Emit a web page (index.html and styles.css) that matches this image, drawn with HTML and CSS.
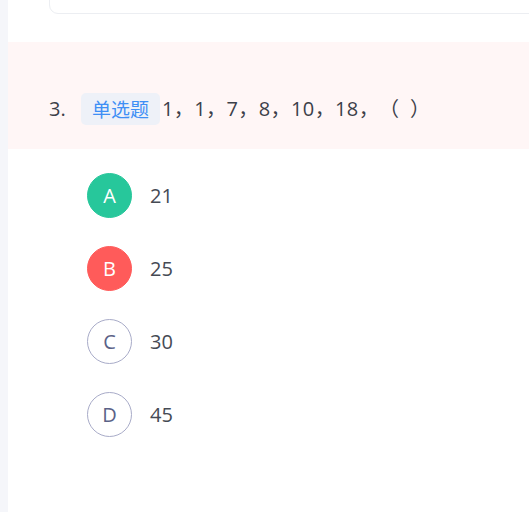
FILE: index.html
```html
<!DOCTYPE html>
<html lang="zh">
<head>
<meta charset="utf-8">
<link rel="stylesheet" href="styles.css">
</head>
<body>
<div class="page">
  <div class="side"></div>
  <div class="main">
    <div class="card"></div>
    <div class="question">
      <span class="num">3.</span>
      <span class="tag">单选题</span>
      <span class="stem">1，1，7，8，10，18，（ ）</span>
    </div>
    <ul class="options">
      <li class="opt"><span class="circle correct">A</span><span class="val">21</span></li>
      <li class="opt"><span class="circle wrong">B</span><span class="val">25</span></li>
      <li class="opt"><span class="circle">C</span><span class="val">30</span></li>
      <li class="opt"><span class="circle">D</span><span class="val">45</span></li>
    </ul>
  </div>
</div>
</body>
</html>
```
FILE: styles.css
```css
* { box-sizing: border-box; }
html, body { margin: 0; padding: 0; background: #fff; }
body {
  font-family: "Open Sans", "Noto Sans CJK SC", sans-serif;
  color: #3c4049;
  overflow: hidden;
}
.page {
  display: flex;
  height: 512px;
}
.side {
  width: 8px;
  flex: none;
  background: #f5f6fa;
}
.main {
  flex: 1;
  display: flex;
  flex-direction: column;
}
.card {
  margin: -40px -20px 0 41px;
  height: 54px;
  border: 1px solid #eceef2;
  border-radius: 9px;
}
.question {
  margin-top: 28px;
  height: 107px;
  background: #fff6f6;
  display: flex;
  align-items: center;
  padding: 26px 0 0 41px;
  font-size: 20px;
  line-height: 32px;
}
.num {
  width: 32px;
  color: #3c4049;
}
.tag {
  font-family: "Noto Sans CJK SC", sans-serif;
  font-size: 19px;
  line-height: 32px;
  height: 32px;
  padding: 0 11px;
  background: #eef1f8;
  color: #3e8ff5;
  border-radius: 5px;
  margin-right: 2px;
}
.stem {
  font-family: "Open Sans", "Noto Sans CJK SC", sans-serif;
  color: #3c4049;
  text-spacing-trim: space-all;
  font-feature-settings: "halt" 0;
  letter-spacing: 0.4px;
  word-spacing: 5px;
}
.options {
  list-style: none;
  margin: 24px 0 0 0;
  padding: 0 0 0 79px;
  display: flex;
  flex-direction: column;
  gap: 28px;
}
.opt {
  display: flex;
  align-items: center;
  height: 45px;
}
.circle {
  width: 45px;
  height: 45px;
  border-radius: 50%;
  border: 1px solid #a8abc8;
  color: #5b6287;
  display: flex;
  align-items: center;
  justify-content: center;
  font-size: 20px;
  margin-right: 18px;
}
.circle.correct {
  background: #27c79b;
  border-color: #27c79b;
  color: #fff;
}
.circle.wrong {
  background: #ff5b5a;
  border-color: #ff5b5a;
  color: #fff;
}
.val {
  font-size: 20px;
  color: #454a54;
}
```
